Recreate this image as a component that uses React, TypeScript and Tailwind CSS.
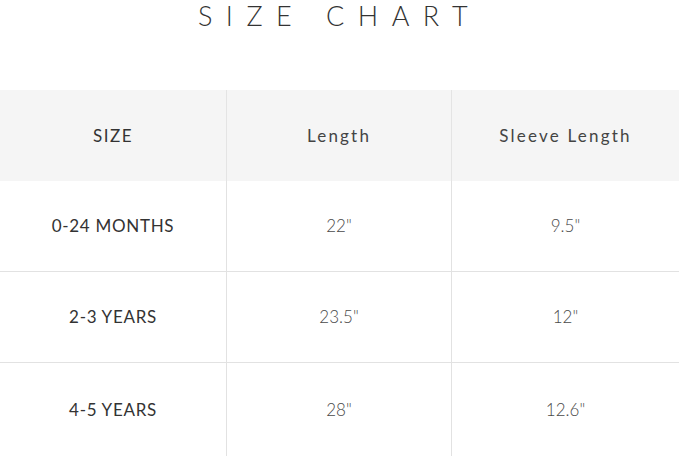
const rows = [
  { size: "0-24 MONTHS", length: "22\"", sleeve: "9.5\"" },
  { size: "2-3 YEARS", length: "23.5\"", sleeve: "12\"" },
  { size: "4-5 YEARS", length: "28\"", sleeve: "12.6\"" },
];

const App = () => {
  return (
    <div className="w-[679px] h-[456px] overflow-hidden bg-white font-['Lato',sans-serif]">
      <div className="h-[90px] flex justify-center">
        <h1 className="text-[27px] leading-[32px] font-light tracking-[13.5px] text-[#333]">
          SIZE CHART
        </h1>
      </div>

      <div className="grid grid-cols-[227px_225px_227px]">
        <div className="h-[91px] bg-[#f5f5f5] border-r border-[#e4e4e4] flex items-center justify-center text-[17px] tracking-[1.5px] text-[#333]">
          SIZE
        </div>
        <div className="h-[91px] bg-[#f5f5f5] border-r border-[#e4e4e4] flex items-center justify-center text-[17px] tracking-[2.2px] text-[#444]">
          Length
        </div>
        <div className="h-[91px] bg-[#f5f5f5] flex items-center justify-center text-[17px] tracking-[2.2px] text-[#444]">
          Sleeve Length
        </div>

        {rows.map((r, i) => (
          <div key={r.size} className="contents">
            <div
              className={
                i < rows.length - 1
                  ? "h-[91px] border-r border-b border-[#e2e2e2] flex items-center justify-center text-[17px] tracking-[0.7px] text-[#333]"
                  : "h-[93px] border-r border-[#e2e2e2] flex items-center justify-center text-[17px] tracking-[0.7px] text-[#333]"
              }
            >
              {r.size}
            </div>
            <div
              className={
                i < rows.length - 1
                  ? "h-[91px] border-r border-b border-[#e2e2e2] flex items-center justify-center text-[17px] font-light text-[#4a4a4a]"
                  : "h-[93px] border-r border-[#e2e2e2] flex items-center justify-center text-[17px] font-light text-[#4a4a4a]"
              }
            >
              {r.length}
            </div>
            <div
              className={
                i < rows.length - 1
                  ? "h-[91px] border-b border-[#e2e2e2] flex items-center justify-center text-[17px] font-light text-[#4a4a4a]"
                  : "h-[93px] flex items-center justify-center text-[17px] font-light text-[#4a4a4a]"
              }
            >
              {r.sleeve}
            </div>
          </div>
        ))}
      </div>
    </div>
  );
};

export default App;
